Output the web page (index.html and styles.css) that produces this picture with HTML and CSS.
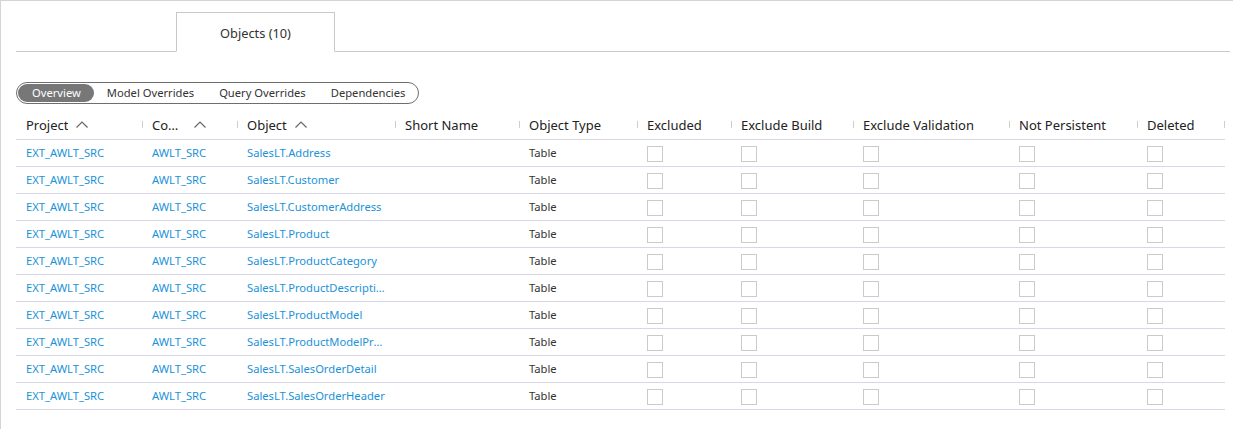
FILE: index.html
```html
<!DOCTYPE html>
<html>
<head>
<meta charset="utf-8">
<link rel="stylesheet" href="styles.css">
</head>
<body>
<div class="frame">
  <div class="tabstrip">
    <div class="tab">Objects (10)</div>
  </div>
  <div class="pills">
    <span class="pill active">Overview</span>
    <span class="pill">Model Overrides</span>
    <span class="pill">Query Overrides</span>
    <span class="pill">Dependencies</span>
  </div>
  <div class="grid">
    <div class="row head">
      <div class="hc first"><span class="ht">Project</span><svg class="sort" viewBox="0 0 12 7"><polyline points="0.5,6.5 6,1 11.5,6.5"/></svg></div>
      <div class="hc"><i class="sep"></i><span class="ht trunc">Connection</span><svg class="sort wide" viewBox="0 0 12 7"><polyline points="0.5,6.5 6,1 11.5,6.5"/></svg></div>
      <div class="hc"><i class="sep"></i><span class="ht">Object</span><svg class="sort" viewBox="0 0 12 7"><polyline points="0.5,6.5 6,1 11.5,6.5"/></svg></div>
      <div class="hc"><i class="sep"></i><span class="ht">Short Name</span></div>
      <div class="hc"><i class="sep"></i><span class="ht">Object Type</span></div>
      <div class="hc"><i class="sep"></i><span class="ht">Excluded</span></div>
      <div class="hc"><i class="sep"></i><span class="ht">Exclude Build</span></div>
      <div class="hc"><i class="sep"></i><span class="ht">Exclude Validation</span></div>
      <div class="hc"><i class="sep"></i><span class="ht">Not Persistent</span></div>
      <div class="hc"><i class="sep"></i><span class="ht">Deleted</span></div>
      <div class="hc end"><i class="sep"></i></div>
    </div>

    <div class="row"><a class="c link">EXT_AWLT_SRC</a><a class="c link">AWLT_SRC</a><a class="c link">SalesLT.Address</a><span class="c"></span><span class="c">Table</span><span class="k"><i class="cb"></i></span><span class="k"><i class="cb"></i></span><span class="k"><i class="cb"></i></span><span class="k"><i class="cb"></i></span><span class="k"><i class="cb"></i></span><span></span></div>
    <div class="row"><a class="c link">EXT_AWLT_SRC</a><a class="c link">AWLT_SRC</a><a class="c link">SalesLT.Customer</a><span class="c"></span><span class="c">Table</span><span class="k"><i class="cb"></i></span><span class="k"><i class="cb"></i></span><span class="k"><i class="cb"></i></span><span class="k"><i class="cb"></i></span><span class="k"><i class="cb"></i></span><span></span></div>
    <div class="row"><a class="c link">EXT_AWLT_SRC</a><a class="c link">AWLT_SRC</a><a class="c link">SalesLT.CustomerAddress</a><span class="c"></span><span class="c">Table</span><span class="k"><i class="cb"></i></span><span class="k"><i class="cb"></i></span><span class="k"><i class="cb"></i></span><span class="k"><i class="cb"></i></span><span class="k"><i class="cb"></i></span><span></span></div>
    <div class="row"><a class="c link">EXT_AWLT_SRC</a><a class="c link">AWLT_SRC</a><a class="c link">SalesLT.Product</a><span class="c"></span><span class="c">Table</span><span class="k"><i class="cb"></i></span><span class="k"><i class="cb"></i></span><span class="k"><i class="cb"></i></span><span class="k"><i class="cb"></i></span><span class="k"><i class="cb"></i></span><span></span></div>
    <div class="row"><a class="c link">EXT_AWLT_SRC</a><a class="c link">AWLT_SRC</a><a class="c link">SalesLT.ProductCategory</a><span class="c"></span><span class="c">Table</span><span class="k"><i class="cb"></i></span><span class="k"><i class="cb"></i></span><span class="k"><i class="cb"></i></span><span class="k"><i class="cb"></i></span><span class="k"><i class="cb"></i></span><span></span></div>
    <div class="row"><a class="c link">EXT_AWLT_SRC</a><a class="c link">AWLT_SRC</a><a class="c link">SalesLT.ProductDescription</a><span class="c"></span><span class="c">Table</span><span class="k"><i class="cb"></i></span><span class="k"><i class="cb"></i></span><span class="k"><i class="cb"></i></span><span class="k"><i class="cb"></i></span><span class="k"><i class="cb"></i></span><span></span></div>
    <div class="row"><a class="c link">EXT_AWLT_SRC</a><a class="c link">AWLT_SRC</a><a class="c link">SalesLT.ProductModel</a><span class="c"></span><span class="c">Table</span><span class="k"><i class="cb"></i></span><span class="k"><i class="cb"></i></span><span class="k"><i class="cb"></i></span><span class="k"><i class="cb"></i></span><span class="k"><i class="cb"></i></span><span></span></div>
    <div class="row"><a class="c link">EXT_AWLT_SRC</a><a class="c link">AWLT_SRC</a><a class="c link">SalesLT.ProductModelProductDescription</a><span class="c"></span><span class="c">Table</span><span class="k"><i class="cb"></i></span><span class="k"><i class="cb"></i></span><span class="k"><i class="cb"></i></span><span class="k"><i class="cb"></i></span><span class="k"><i class="cb"></i></span><span></span></div>
    <div class="row"><a class="c link">EXT_AWLT_SRC</a><a class="c link">AWLT_SRC</a><a class="c link">SalesLT.SalesOrderDetail</a><span class="c"></span><span class="c">Table</span><span class="k"><i class="cb"></i></span><span class="k"><i class="cb"></i></span><span class="k"><i class="cb"></i></span><span class="k"><i class="cb"></i></span><span class="k"><i class="cb"></i></span><span></span></div>
    <div class="row"><a class="c link">EXT_AWLT_SRC</a><a class="c link">AWLT_SRC</a><a class="c link">SalesLT.SalesOrderHeader</a><span class="c"></span><span class="c">Table</span><span class="k"><i class="cb"></i></span><span class="k"><i class="cb"></i></span><span class="k"><i class="cb"></i></span><span class="k"><i class="cb"></i></span><span class="k"><i class="cb"></i></span><span></span></div>
  </div>
</div>
</body>
</html>
```

FILE: styles.css
```css
* { box-sizing: border-box; }
html, body { margin: 0; padding: 0; background: #fff; }
body {
  font-family: "Segoe UI", "Noto Sans", "Open Sans", sans-serif;
  color: #222;
}
.frame {
  height: 429px;
  border-top: 1px solid #d4d4d4;
  border-left: 1px solid #d4d4d4;
  padding-top: 11px;
}
.tabstrip {
  margin: 0 3px 0 15px;
  border-bottom: 1px solid #c8c8c8;
  height: 40px;
  display: flex;
  padding-left: 160px;
}
.tab {
  width: 159px;
  height: 40px;
  border: 1px solid #c8c8c8;
  border-bottom: 1px solid #fff;
  background: #fff;
  display: flex;
  align-items: center;
  justify-content: center;
  font-size: 12.8px;
  color: #333;
  padding-top: 1px;
}
.pills {
  margin: 30px 0 0 15px;
  display: inline-flex;
  align-items: center;
  height: 22px;
  border: 1px solid #6e6e6e;
  border-radius: 11px;
  padding: 0 1px;
}
.pill {
  font-size: 11.2px;
  color: #333;
  height: 18px;
  line-height: 17px;
  padding: 0 12px 0 13px;
  border-radius: 9px;
  white-space: nowrap;
}
.pill.active {
  background: #777;
  color: #fff;
  padding: 0 13px 0 14px;
}
.grid {
  margin-left: 15px;
  margin-top: 5px;
}
.row {
  display: grid;
  grid-template-columns: 126px 95px 158px 124px 118px 94px 122px 156px 128px 87px 1px;
  height: 27px;
  border-bottom: 1px solid #d9d6e6;
  align-items: center;
  width: 1209px;
}
.row.head {
  height: 31px;
  padding-top: 1px;
}
.hc {
  display: flex;
  align-items: center;
  font-size: 13px;
  color: #222;
  white-space: nowrap;
  overflow: hidden;
}
.hc.first { padding-left: 10px; }
.hc.end { overflow: visible; }
.sep {
  display: block;
  width: 1px;
  height: 7px;
  background: #cfcfcf;
  margin-right: 9px;
  flex: none;
}
.ht { overflow: hidden; text-overflow: ellipsis; }
.ht.trunc { max-width: 30px; }
.sort {
  width: 12px;
  height: 7px;
  margin-left: 8px;
  flex: none;
  fill: none;
  stroke: #666;
  stroke-width: 1.2;
}
.sort.wide { margin-left: 12px; }
.c {
  padding: 0 10px 2px 10px;
  font-size: 11.2px;
  color: #333;
  white-space: nowrap;
  overflow: hidden;
  text-overflow: ellipsis;
  display: block;
}
.link { color: #1a92d8; text-decoration: none; }
.k { display: block; padding-left: 10px; }
.cb {
  display: block;
  width: 16px;
  height: 16px;
  border: 1px solid #cbcbcb;
  background: #fff;
  margin-top: 1px;
}
```
